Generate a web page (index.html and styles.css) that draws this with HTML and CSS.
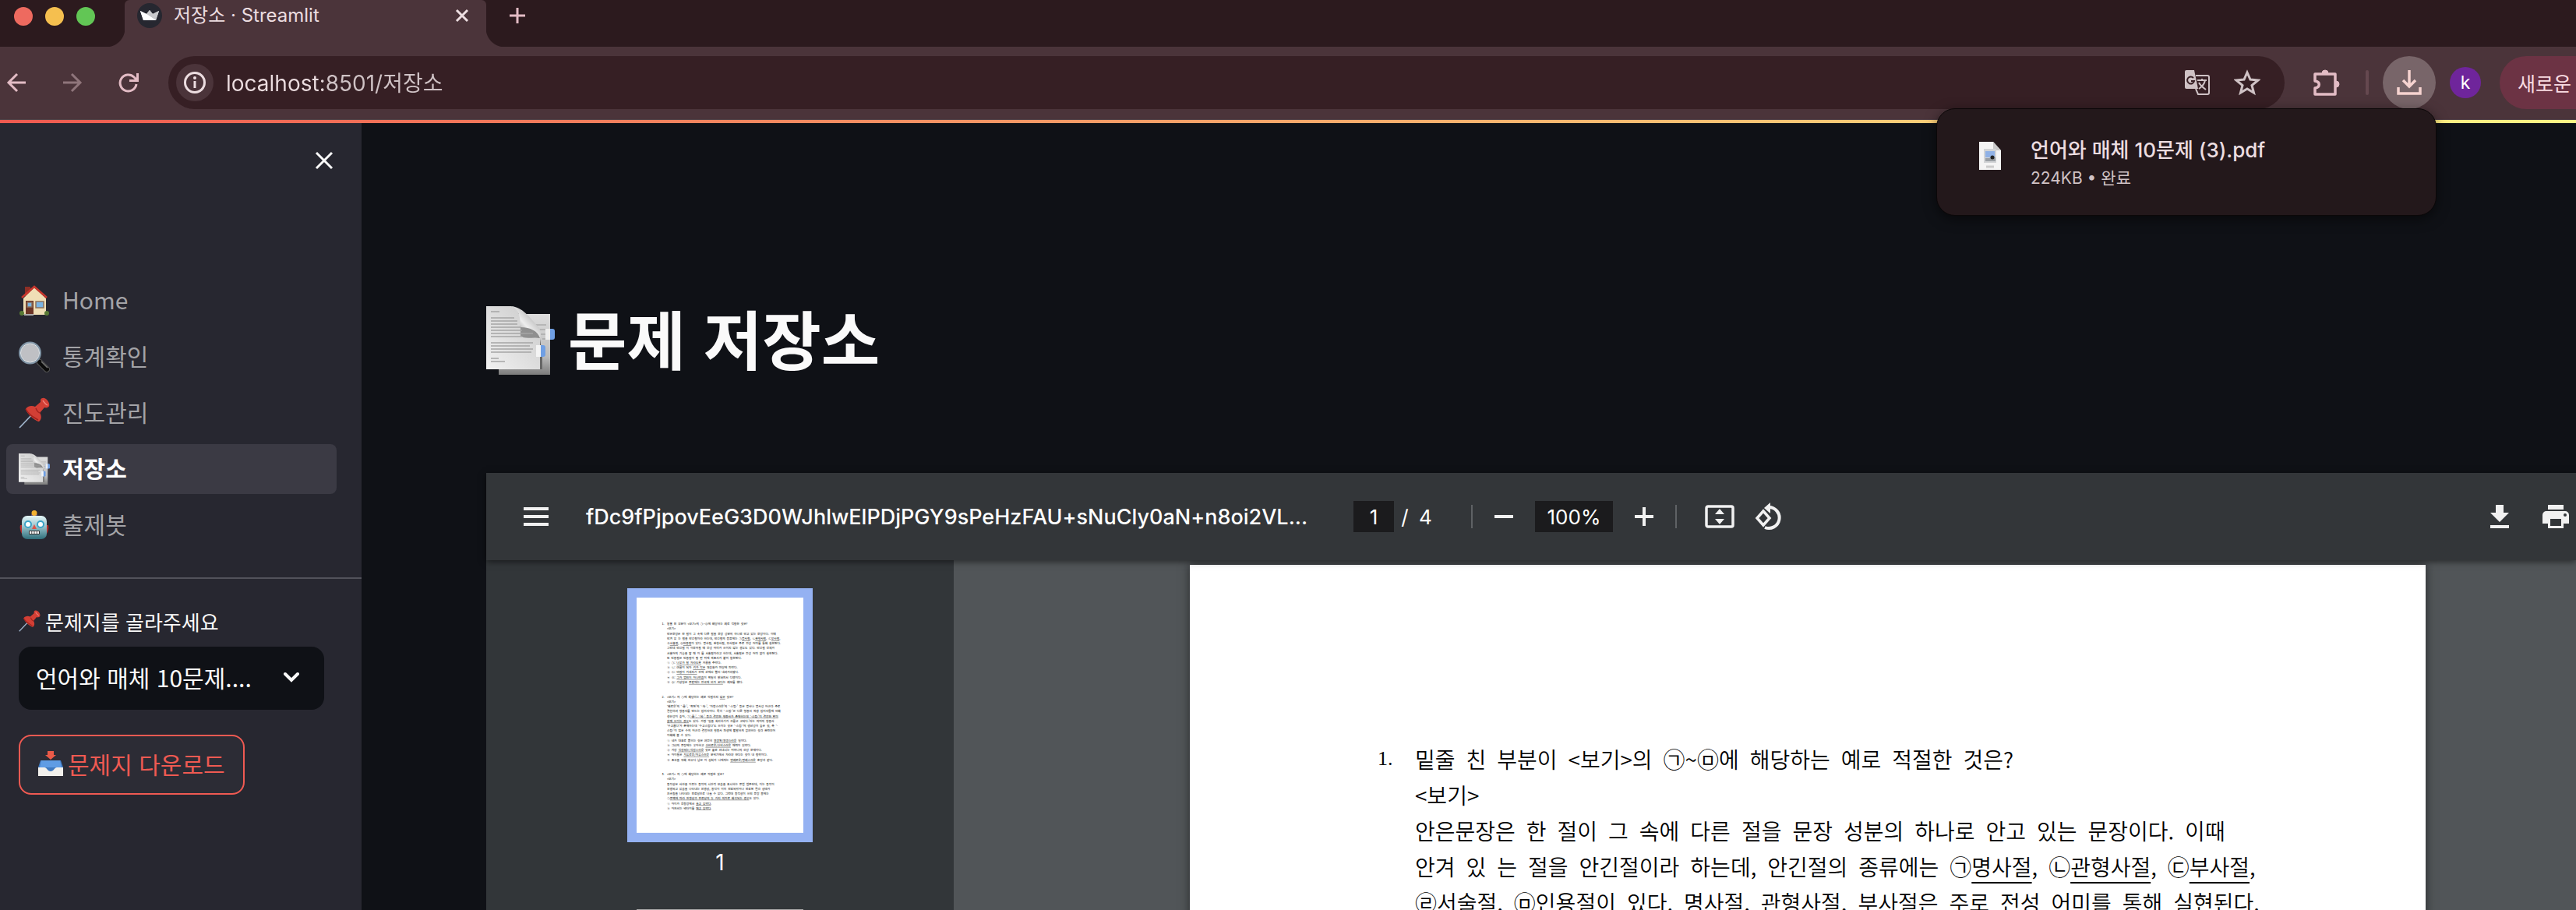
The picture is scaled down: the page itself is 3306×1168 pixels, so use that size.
FILE: index.html
```html
<!DOCTYPE html>
<html lang="ko">
<head>
<meta charset="utf-8">
<title>저장소 · Streamlit</title>
<link rel="stylesheet" href="styles.css">
</head>
<body>
<svg class="sprites" aria-hidden="true">
  <defs>
    <linearGradient id="paper" x1="0" y1="1" x2="1" y2="0"><stop offset="0" stop-color="#f1f1f1"/><stop offset="1" stop-color="#c9c9c9"/></linearGradient>
    <linearGradient id="curl" x1="0" y1="1" x2="1" y2="0"><stop offset="0" stop-color="#555"/><stop offset=".45" stop-color="#eee"/><stop offset="1" stop-color="#888"/></linearGradient>
    <linearGradient id="bot" x1="0" y1="0" x2="0" y2="1"><stop offset="0" stop-color="#e4f6f8"/><stop offset=".45" stop-color="#9cc4cc"/><stop offset="1" stop-color="#2f6f7b"/></linearGradient>
    <linearGradient id="backpaper" x1="0" y1="0" x2="0" y2="1"><stop offset="0" stop-color="#ddd"/><stop offset=".7" stop-color="#bbb"/><stop offset="1" stop-color="#7c7c7c"/></linearGradient>
  </defs>
  <symbol id="docs" viewBox="0 0 88 88">
    <path d="M16 10h66v78H16z" fill="url(#backpaper)"/>
    <path d="M60 24h17M66 30h11M70 36h7M72 42h5" stroke="#999" stroke-width="1"/>
    <path d="M0 0h32c8 2 11 9 11 18 2 9 22 8 26 22v41H0z" fill="url(#paper)"/>
    <path d="M69 42v39h3V62z" fill="#666"/>
    <path d="M32 0c14 1 23 13 36 28 2 3 2 9 1 13-3-9-13-14-26-14 2-12-1-23-11-27z" fill="url(#curl)"/>
    <path d="M44 27c13 0 22 5 25 14-8-2-20 2-25-3z" fill="#555" opacity=".55"/>
    <path d="M6 7h11M6 15h30M6 19h34M6 23h34M6 27h38M6 31h40M6 35h54M6 39h40M6 47h54M6 51h50M6 55h54M6 59h52M6 67h10M6 71h18" stroke="#a5a5a5" stroke-width="1.3"/>
    <rect x="76" y="29" width="12" height="14" rx="3" fill="#6f9fe4"/><path d="M76 29h6v14h-6z" fill="#eee"/>
    <rect x="64" y="50" width="12" height="15" rx="3" fill="#6f9fe4"/><path d="M64 50h6v15h-6z" fill="#f4f4f4"/>
  </symbol>
  <symbol id="pin" viewBox="0 0 40 40">
    <path d="M1 39L20 19" stroke="#9fb4cb" stroke-width="1.8"/>
    <path d="M28 3c2-4 7-2 9 1 3 4 3 8 0 9-2 1-4 0-4 0l-6 7c3 4 2 9-1 11-4 0-16-10-17-16 2-4 8-5 12-3l7-6z" fill="#d23f35"/>
    <path d="M22 14c2 5 5 6 6 6M9 15c4 7 9 10 16 14" stroke="#a3231e" stroke-width="1.5" fill="none"/>
    <path d="M31 4c2 3 3 5 6 6" stroke="#f08078" stroke-width="1.5" fill="none"/>
  </symbol>
</svg>

<header class="chrome">
  <div class="tabstrip">
    <div class="lights"><span class="light red"></span><span class="light yellow"></span><span class="light green"></span></div>
    <div class="tab">
      <svg class="favicon" viewBox="0 0 32 32"><circle cx="16" cy="16" r="16" fill="#262730"/><path d="M4 10l8 4 4-5 4 5 8-4-4 12H8z" fill="#fff"/><path d="M12 14l4-5 4 5 8-4-4 12z" fill="#c9c9cc"/><path d="M12 14l12 8H8L4 10z" fill="#fff"/></svg>
      <span class="tab-title">저장소 · Streamlit</span>
      <button class="icon-btn tab-close" aria-label="탭 닫기"><svg width="18" height="18" viewBox="0 0 18 18"><path d="M2 2l14 14M16 2L2 16" stroke="#ecdde0" stroke-width="3"/></svg></button>
    </div>
    <button class="icon-btn new-tab" aria-label="새 탭"><svg width="20" height="20" viewBox="0 0 20 20"><path d="M10 0v20M0 10h20" stroke="#e3bcc5" stroke-width="3"/></svg></button>
  </div>

  <div class="toolbar">
    <div class="history">
      <button class="icon-btn" aria-label="뒤로"><svg width="26" height="26" viewBox="0 0 26 26"><path d="M25 13H3M14 2L3 13l11 11" fill="none" stroke="#e3bcc5" stroke-width="3"/></svg></button>
      <button class="icon-btn" aria-label="앞으로"><svg width="26" height="26" viewBox="0 0 26 26"><path d="M1 13h22M12 2l11 11-11 11" fill="none" stroke="#8f757b" stroke-width="3"/></svg></button>
      <button class="icon-btn" aria-label="새로고침"><svg width="26" height="26" viewBox="0 0 26 26"><path d="M23 15a10.500 10.500 0 1 1-3-9l4 4" fill="none" stroke="#e3bcc5" stroke-width="3"/><path d="M26 1v11H14V9h9V1z" fill="#e3bcc5"/></svg></button>
    </div>
    <form class="omnibox">
      <button type="button" class="icon-btn site-info" aria-label="사이트 정보"><svg width="28" height="28" viewBox="0 0 28 28"><circle cx="14" cy="14" r="12.500" fill="none" stroke="#ecdde0" stroke-width="3"/><path d="M14 12v9" stroke="#ecdde0" stroke-width="3"/><circle cx="14" cy="8" r="2" fill="#ecdde0"/></svg></button>
      <input class="url" type="text" aria-label="주소창" value="localhost:8501/저장소">
      <button type="button" class="icon-btn" aria-label="번역"><svg width="34" height="34" viewBox="0 0 34 34"><path d="M3 1h10l5 24H3a2 2 0 0 1-2-2V3a2 2 0 0 1 2-2z" fill="#cfc2c5"/><path d="M15 8h15a2 2 0 0 1 2 2v20a2 2 0 0 1-2 2H18l-3-7" fill="none" stroke="#cfc2c5" stroke-width="2"/><path d="M12 11a4.500 4.500 0 1 0 1 4H9" fill="none" stroke="#361f24" stroke-width="2"/><path d="M17 14h12M23 12v2M27 14c-1 5-5 9-8 11M19 17c2 4 5 6 9 9" fill="none" stroke="#cfc2c5" stroke-width="2"/></svg></button>
      <button type="button" class="icon-btn" aria-label="북마크"><svg width="34" height="34" viewBox="0 0 34 34"><path d="M17 4l4 9 10 1-8 6.500L25.500 30 17 25l-8.500 5L11 20.500 3 14l10-1z" fill="none" stroke="#cfc2c5" stroke-width="3"/></svg></button>
    </form>
    <div class="actions">
      <button class="icon-btn" aria-label="확장 프로그램"><svg width="36" height="36" viewBox="0 0 36 36"><path d="M4 7h26v26H4v-8c7-1 7-8 0-9z" fill="none" stroke="#e3bcc5" stroke-width="3.500" stroke-linejoin="round"/><path d="M13 6a4 4 0 0 1 8 0zM31 16a4 4 0 0 1 0 8z" fill="#e3bcc5" stroke="#e3bcc5"/></svg></button>
      <span class="sep"></span>
      <button class="icon-btn dl-btn" aria-label="다운로드"><svg width="32" height="32" viewBox="0 0 32 32"><path d="M16 0v21M8 13l8 8 8-8M2 22v8h28v-8" fill="none" stroke="#f6d3d0" stroke-width="3.500"/></svg></button>
      <button class="avatar">k</button>
      <button class="update">새로운</button>
    </div>
    <aside class="download-popup">
      <svg class="pdf-icon" width="28" height="36" viewBox="0 0 28 36"><path d="M0 0h18l10 11v25H0z" fill="#f4f4f4"/><path d="M18 0l10 11H18z" fill="#c9c9c9"/><rect x="6" y="9" width="16" height="18" fill="#d2d4d6"/><rect x="8" y="12" width="12" height="8" fill="#8fb1e6"/><path d="M8 21h5l4-3 4 2v5H8z" fill="#9a9fa4"/><circle cx="17" cy="20" r="2.500" fill="#222"/><path d="M9 32h10" stroke="#ccc" stroke-width="3"/></svg>
      <div>
        <p class="file-name">언어와 매체 10문제 (3).pdf</p>
        <p class="file-meta">224KB • 완료</p>
      </div>
    </aside>
  </div>
</header>
<div class="decoration"></div>

<div class="app">
  <aside class="sidebar">
    <div class="sidebar-head"><button class="icon-btn" aria-label="사이드바 닫기"><svg width="24" height="24" viewBox="0 0 24 24"><path d="M2 2l20 20M22 2L2 22" stroke="#fafafa" stroke-width="3"/></svg></button></div>
    <nav class="nav">
      <a href="#home"><svg class="emoji" viewBox="0 0 40 40"><path d="M8 2h7v12H8z" fill="#8d2f26"/><path d="M20 3l15 14v21H6V17z" fill="#f0dfb6"/><path d="M4 16L20 2l16 14" fill="none" stroke="#c8372d" stroke-width="2.500"/><path d="M9 20h10v18H9z" fill="#6c3526"/><path d="M11 22h6v6h-6zM22 21h10v8H22z" fill="#79b4e4" stroke="#8a715c" stroke-width="1.500"/><circle cx="4" cy="36" r="3" fill="#587a35"/><circle cx="36" cy="36" r="3" fill="#587a35"/><path d="M7 37h12v2H7z" fill="#aaa"/></svg><span>Home</span></a>
      <a href="#stats"><svg class="emoji" viewBox="0 0 40 40"><path d="M25 25l4 4" stroke="#999" stroke-width="4"/><path d="M27 27l9 9" stroke="#555" stroke-width="8" stroke-linecap="round"/><path d="M27 27l9 9" stroke="#0b0b0b" stroke-width="6" stroke-linecap="round"/><path d="M29 26l8 8" stroke="#777" stroke-width="1.500"/><circle cx="14.500" cy="15" r="13" fill="#bfc0c4" stroke="#8195a6" stroke-width="3"/><circle cx="14.500" cy="15" r="12" fill="none" stroke="#e6e8ea" stroke-width="1"/></svg><span>통계확인</span></a>
      <a href="#progress"><svg class="emoji"><use href="#pin"/></svg><span>진도관리</span></a>
      <a href="#storage" class="current"><svg class="emoji"><use href="#docs"/></svg><span>저장소</span></a>
      <a href="#bot"><svg class="emoji" viewBox="0 0 40 40"><path d="M2 20h6v11H4c-2-3-3-8-2-11zM38 20h-6v11h4c2-3 3-8 2-11z" fill="#b22e2e"/><path d="M16 6h8v4h-8z" fill="#59457c"/><circle cx="20" cy="4.500" r="3.500" fill="#f2b233"/><rect x="4" y="8" width="32" height="30" rx="7" fill="url(#bot)"/><circle cx="12" cy="19" r="4" fill="#fff" stroke="#3ba4c8" stroke-width="2"/><circle cx="28" cy="19" r="4" fill="#fff" stroke="#3ba4c8" stroke-width="2"/><path d="M20 19l3 6h-6z" fill="#de5246"/><rect x="13" y="27" width="14" height="5" rx="1" fill="#333"/><path d="M14 29.500h12" stroke="#fff" stroke-width="3" stroke-dasharray="2.400 .800"/></svg><span>출제봇</span></a>
    </nav>
    <section class="picker">
      <label for="paper-select"><svg class="emoji small"><use href="#pin"/></svg>문제지를 골라주세요</label>
      <div class="select-wrap">
        <select id="paper-select"><option>언어와 매체 10문제....</option></select>
        <svg class="chevron" width="20" height="14" viewBox="0 0 20 14"><path d="M2 3l8 8 8-8" fill="none" stroke="#fafafa" stroke-width="4" stroke-linecap="round"/></svg>
      </div>
      <button class="download"><svg class="inbox" viewBox="0 0 32 32"><path d="M3 12h26l3 9v11H0V21z" fill="#3f79bf"/><path d="M4 12h24l2 9H2z" fill="#5f9ce4"/><path d="M0 21h8c3 0 4 5 8 5s5-5 8-5h8v11H0z" fill="#f2f0ec"/><path d="M12 0h8v5h3l-7 6-7-6h3z" fill="#ea5a48"/></svg>문제지 다운로드</button>
    </section>
  </aside>

  <main class="main">
    <h1><svg class="title-icon"><use href="#docs"/></svg><span>문제 저장소</span></h1>
    <section class="viewer">
      <div class="viewer-bar">
        <button class="icon-btn menu" aria-label="메뉴"><svg width="32" height="24" viewBox="0 0 32 24"><path d="M0 2h32M0 12h32M0 22h32" stroke="#f1f1f1" stroke-width="4"/></svg></button>
        <span class="doc-name">fDc9fPjpovEeG3D0WJhlwElPDjPGY9sPeHzFAU+sNuCly0aN+n8oi2VL...</span>
        <div class="pages"><input class="field page-field" type="text" aria-label="페이지" value="1"><span>/</span><span>4</span></div>
        <span class="vsep"></span>
        <div class="zoom">
          <button class="icon-btn" aria-label="축소"><svg width="24" height="24" viewBox="0 0 24 24"><path d="M0 12h24" stroke="#f1f1f1" stroke-width="4"/></svg></button>
          <input class="field zoom-field" type="text" aria-label="확대 비율" value="100%">
          <button class="icon-btn" aria-label="확대"><svg width="24" height="24" viewBox="0 0 24 24"><path d="M0 12h24M12 0v24" stroke="#f1f1f1" stroke-width="4"/></svg></button>
        </div>
        <span class="vsep"></span>
        <div class="fit">
          <button class="icon-btn" aria-label="페이지에 맞춤"><svg width="38" height="30" viewBox="0 0 38 30"><rect x="2" y="2" width="34" height="26" rx="2" fill="none" stroke="#f1f1f1" stroke-width="3.500"/><path d="M19 5l6 7H13zM19 25l6-7H13z" fill="#f1f1f1"/></svg></button>
          <button class="icon-btn" aria-label="회전"><svg width="36" height="36" viewBox="0 0 36 36"><path d="M11 11l8 9-8 9-8-9z" fill="none" stroke="#f1f1f1" stroke-width="3.500"/><path d="M18 6a13.500 13.500 0 1 1-5 26" fill="none" stroke="#f1f1f1" stroke-width="4"/><path d="M20 0v14l-8-7z" fill="#f1f1f1"/></svg></button>
        </div>
        <div class="viewer-end">
          <button class="icon-btn" aria-label="저장"><svg width="24" height="30" viewBox="0 0 24 30"><path d="M7 0h10v10h7L12 22 0 10h7zM0 26h24v4H0z" fill="#f1f1f1"/></svg></button>
          <button class="icon-btn" aria-label="인쇄"><svg width="34" height="30" viewBox="0 0 34 30"><path d="M7 0h20v6H7zM5 8h24a5 5 0 0 1 5 5v11h-7v6H7v-6H0V13a5 5 0 0 1 5-5zm5 10v9h14v-9z" fill="#f1f1f1" fill-rule="evenodd"/><circle cx="29" cy="13" r="2" fill="#323639"/></svg></button>
        </div>
      </div>
      <div class="viewer-body">
        <div class="thumbs">
          <button class="thumb" aria-label="페이지 1">
            <svg class="thumb-page" viewBox="0 0 1586 2237">
              <rect width="1586" height="2237" fill="#fff"/>
              <g class="thumb-text">
                <text x="240" y="261">1.</text><text x="289" y="261">밑줄&ensp;친&ensp;부분이&ensp;&lt;보기&gt;의&ensp;㉠~㉤에&ensp;해당하는&ensp;예로&ensp;적절한&ensp;것은?</text>
                <text x="289" y="306">&lt;보기&gt;</text>
                <text x="289" y="355">안은문장은&ensp;한&ensp;절이&ensp;그&ensp;속에&ensp;다른&ensp;절을&ensp;문장&ensp;성분의&ensp;하나로&ensp;안고&ensp;있는&ensp;문장이다.&ensp;이때</text>
                <text x="289" y="400">안겨&ensp;있&ensp;는&ensp;절을&ensp;안긴절이라&ensp;하는데,&ensp;안긴절의&ensp;종류에는&ensp;㉠<tspan class="u">명사절</tspan>,&ensp;㉡<tspan class="u">관형사절</tspan>,&ensp;㉢<tspan class="u">부사절</tspan>,</text>
                <text x="289" y="445">㉣<tspan class="u">서술절</tspan>,&ensp;㉤<tspan class="u">인용절</tspan>이&ensp;있다.&ensp;명사절,&ensp;관형사절,&ensp;부사절은&ensp;주로&ensp;전성&ensp;어미를&ensp;통해&ensp;실현된다.</text>
                <text x="289" y="489">그런데&ensp;안긴절&ensp;이&ensp;이루어질&ensp;때&ensp;전성&ensp;어미가&ensp;쓰이지&ensp;않는&ensp;경우도&ensp;있다.&ensp;안긴절&ensp;전체가</text>
                <text x="289" y="540">서술어의&ensp;기능을&ensp;할&ensp;때&ensp;이&ensp;를&ensp;서술절이라고&ensp;하는데,&ensp;서술절은&ensp;전성&ensp;어미&ensp;없이&ensp;실현된다.</text>
                <text x="289" y="585">또&ensp;인용절은&ensp;인용절이&ensp;될&ensp;말&ensp;뒤에&ensp;격조사가&ensp;붙어&ensp;실현된다.</text>
                <text x="289" y="630">①&ensp;㉠:&ensp;<tspan class="u">나무가&ensp;잘&ensp;자라도록</tspan>&ensp;거름을&ensp;주었다.</text>
                <text x="289" y="675">②&ensp;㉡:&ensp;여름이&ensp;되자&ensp;<tspan class="u">키가&ensp;작은</tspan>&ensp;채송화가&ensp;마당에&ensp;피었다.</text>
                <text x="289" y="720">③&ensp;㉢:&ensp;<tspan class="u">바람이&ensp;거세지기</tspan>&ensp;전에&ensp;산에서&ensp;빨리&ensp;내려가야겠다.</text>
                <text x="289" y="769">④&ensp;㉣:&ensp;<tspan class="u">그가&ensp;범인이&ensp;아니었음</tspan>이&ensp;확실히&ensp;밝혀져서&ensp;다행이다.</text>
                <text x="289" y="814">⑤&ensp;㉤:&ensp;기상청은&ensp;<tspan class="u">주말에는&ensp;전국에&ensp;비가&ensp;온다</tspan>는&ensp;예보를&ensp;했다.</text>
                <text x="240" y="955">2.</text><text x="289" y="955">&lt;보기&gt;&ensp;의&ensp;㉠에&ensp;해당하는&ensp;예로&ensp;적절하지&ensp;<tspan class="u">않은</tspan>&ensp;것은?</text>
                <text x="289" y="1000">&lt;보기&gt;</text>
                <text x="289" y="1043">‘해로운’의&ensp;‘-롭-’,&ensp;‘욕된’의&ensp;‘-되-’,&ensp;‘자랑스러운’의&ensp;‘-스럽-’&ensp;등은&ensp;명사나&ensp;명사성&ensp;어근과&ensp;주로</text>
                <text x="289" y="1088">결합하여&ensp;형용사를&ensp;만드는&ensp;접미사이다.&ensp;특히&ensp;‘-스럽-’은&ensp;다른&ensp;형용사&ensp;파생&ensp;접미사들에&ensp;비해</text>
                <text x="289" y="1138">생산성이&ensp;높아,&ensp;㉠<tspan class="u">‘-롭-’,&ensp;‘-되-’&ensp;등과&ensp;결합한&ensp;형용사가&ensp;존재하는데&ensp;‘-스럽-’이&ensp;결합한&ensp;말이</tspan></text>
                <text x="289" y="1183"><tspan class="u">함께&ensp;쓰이는&ensp;경우</tspan>도&ensp;있다.&ensp;가령&ensp;‘일을&ensp;처리하기가&ensp;괴롭고&ensp;고되다.’라는&ensp;의미의&ensp;형용사</text>
                <text x="289" y="1228">‘수고롭다’가&ensp;존재하는데&ensp;‘수고스럽다’도&ensp;쓰이는&ensp;것은&ensp;‘-스럽-’의&ensp;생산성이&ensp;높은&ensp;것,&ensp;즉&ensp;‘-</text>
                <text x="289" y="1275">스럽-’이&ensp;많은&ensp;수의&ensp;어근과&ensp;결합하여&ensp;형용사&ensp;파생에&ensp;활발하게&ensp;참여하는&ensp;것과&ensp;관련지어</text>
                <text x="289" y="1318">이해해&ensp;볼&ensp;수&ensp;있다.</text>
                <text x="289" y="1370">①&ensp;네가&ensp;대표로&ensp;뽑히는&ensp;것은&ensp;여전히&ensp;<tspan class="u">영광된/영광스러운</tspan>&ensp;일이다.</text>
                <text x="289" y="1414">②&ensp;그녀의&ensp;문장에는&ensp;우아하고&ensp;<tspan class="u">신비로운/신비스러운</tspan>&ensp;매력이&ensp;있었다.</text>
                <text x="289" y="1458">③&ensp;가장&ensp;<tspan class="u">걱정되는/걱정스러운</tspan>&ensp;것은&ensp;홀로&ensp;지내시는&ensp;어머니의&ensp;건강&ensp;문제이다.</text>
                <text x="289" y="1504">④&ensp;아이들은&ensp;<tspan class="u">자유로운/자유스러운</tspan>&ensp;분위기에서&ensp;자라야&ensp;한다는&ensp;것이&ensp;내&ensp;철학이다.</text>
                <text x="289" y="1555">⑤&ensp;조국을&ensp;위해&ensp;싸우다&ensp;남은&ensp;이&ensp;상처가&ensp;나에게는&ensp;<tspan class="u">명예로운/명예스러운</tspan>&ensp;훈장과&ensp;같다.</text>
                <text x="240" y="1688">3.</text><text x="289" y="1688">&lt;보기&gt;&ensp;의&ensp;㉠에&ensp;해당하는&ensp;예로&ensp;적절한&ensp;것은?</text>
                <text x="289" y="1733">&lt;보기&gt;</text>
                <text x="289" y="1783">동작상은&ensp;사건을&ensp;이루는&ensp;동작의&ensp;시간적&ensp;모습을&ensp;표시하는&ensp;문법&ensp;범주인데,&ensp;이는&ensp;동작이</text>
                <text x="289" y="1828">진행되고&ensp;있음을&ensp;나타내는&ensp;진행상,&ensp;동작이&ensp;이미&ensp;완료되었거나&ensp;완료된&ensp;결과&ensp;상태가</text>
                <text x="289" y="1872">지속됨을&ensp;나타내는&ensp;완료상으로&ensp;나눌&ensp;수&ensp;있다.&ensp;그런데&ensp;동작상이&ensp;쓰인&ensp;문장&ensp;중에는</text>
                <text x="289" y="1917">㉠<tspan class="u">문맥에&ensp;따라&ensp;진행상과&ensp;완료상의&ensp;두&ensp;가지&ensp;의미로&ensp;해석되는&ensp;경우</tspan>도&ensp;있다.</text>
                <text x="289" y="1968">①&ensp;아이가&ensp;운동장에서&ensp;<tspan class="u">놀고&ensp;있었다</tspan>.</text>
                <text x="289" y="2012">②&ensp;아저씨는&ensp;넥타이를&ensp;<tspan class="u">매고&ensp;있었다</tspan>.</text>
              </g>
            </svg>
          </button>
          <span class="thumb-no">1</span>
          <div class="thumb-next"></div>
        </div>
        <div class="canvas">
          <article class="page">
            <div class="question">
              <span class="q-no">1.</span>
              <div>
                <p>밑줄&ensp;친&ensp;부분이&ensp;&lt;보기&gt;의&ensp;㉠~㉤에&ensp;해당하는&ensp;예로&ensp;적절한&ensp;것은?</p>
                <p>&lt;보기&gt;</p>
                <p>안은문장은&ensp;한&ensp;절이&ensp;그&ensp;속에&ensp;다른&ensp;절을&ensp;문장&ensp;성분의&ensp;하나로&ensp;안고&ensp;있는&ensp;문장이다.&ensp;이때</p>
                <p>안겨&ensp;있&ensp;는&ensp;절을&ensp;안긴절이라&ensp;하는데,&ensp;안긴절의&ensp;종류에는&ensp;㉠<u>명사절</u>,&ensp;㉡<u>관형사절</u>,&ensp;㉢<u>부사절</u>,</p>
                <p>㉣<u>서술절</u>,&ensp;㉤<u>인용절</u>이&ensp;있다.&ensp;명사절,&ensp;관형사절,&ensp;부사절은&ensp;주로&ensp;전성&ensp;어미를&ensp;통해&ensp;실현된다.</p>
              </div>
            </div>
          </article>
        </div>
      </div>
    </section>
  </main>
</div>
</body>
</html>
```
FILE: styles.css
```css
* { box-sizing: border-box; }

body {
  margin: 0;
  height: 100vh;
  overflow: hidden;
  display: flex;
  flex-direction: column;
  background: #0f1116;
  color: #fafafa;
  font-family: "Noto Sans CJK KR", sans-serif;
}

p, h1 { margin: 0; padding: 0; }
button, input, select { font: inherit; color: inherit; }
svg { display: block; flex: none; }
.sprites { position: absolute; width: 0; height: 0; }

.icon-btn {
  display: flex;
  align-items: center;
  justify-content: center;
  flex: none;
  padding: 0;
  border: 0;
  background: none;
}

/* Browser frame */
.chrome { flex: none; background: #4b343a; font-family: Inter, "Noto Sans CJK KR", sans-serif; }

.tabstrip { display: flex; height: 60px; background: #2c1a1e; }
.lights { display: flex; gap: 16px; width: 160px; padding: 9px 0 0 18px; }
.light { width: 24px; height: 24px; border-radius: 50%; }
.red { background: #ee6a5f; }
.yellow { background: #f5bf4f; }
.green { background: #62c655; }

.tab {
  position: relative;
  display: flex;
  align-items: center;
  width: 464px;
  padding: 0 22px 20px 16px;
  border-radius: 6px 6px 0 0;
  background: #4b343a;
}
.tab::before, .tab::after {
  content: "";
  position: absolute;
  bottom: 0;
  width: 24px;
  height: 24px;
}
.tab::before { right: 100%; background: radial-gradient(circle at 0 0, #2c1a1e 24px, #4b343a 25px); }
.tab::after { left: 100%; background: radial-gradient(circle at 100% 0, #2c1a1e 24px, #4b343a 25px); }
.favicon { width: 32px; height: 32px; }
.tab-title { flex: 1; margin-left: 15px; color: #ecdde0; font-size: 24px; line-height: 32px; }
.new-tab { width: 80px; height: 40px; }

.toolbar { position: relative; display: flex; align-items: center; height: 94px; padding-bottom: 2px; border-bottom: 1px solid #544347; }
.history { display: flex; gap: 46px; width: 216px; padding-left: 8px; }
.omnibox {
  display: flex;
  align-items: center;
  flex: 1;
  min-width: 0;
  height: 68px;
  padding: 0 31px 0 10px;
  gap: 30px;
  border-radius: 34px;
  background: #361f24;
}
.site-info { width: 48px; height: 48px; border-radius: 50%; background: #4b343a; }
.url {
  flex: 1;
  min-width: 0;
  margin-left: -14px;
  padding: 0 0 2px;
  border: 0;
  font-size: 28px;
  color: transparent;
  background: linear-gradient(90deg, #ecdde0 124px, #cfc2c5 124px);
  background-clip: text;
}
.actions { display: flex; align-items: center; flex: none; padding-left: 35px; }
.sep { width: 4px; height: 32px; margin: 0 18px 0 33px; border-radius: 2px; background: #65484f; }
.dl-btn { width: 68px; height: 68px; border-radius: 50%; background: #786569; }
.avatar { width: 40px; height: 40px; margin: 0 24px 0 18px; padding: 0; border: 0; border-radius: 50%; background: #6f259b; color: #fff; font-size: 23px; line-height: 40px; }
.update { width: 98px; height: 68px; padding: 0 0 0 23px; border: 0; border-radius: 34px 0 0 34px; background: #6c3344; color: #f9dce2; font-size: 25px; text-align: left; white-space: nowrap; }

.download-popup {
  position: absolute;
  z-index: 2;
  top: 79px;
  right: 179px;
  display: flex;
  gap: 38px;
  width: 642px;
  height: 138px;
  padding: 35px 54px;
  border: 1px solid #0b0708;
  border-radius: 24px;
  background: #23181b;
  box-shadow: 0 4px 16px #0008;
}
.pdf-icon { margin-top: 7px; }
.file-name { color: #ecdde0; font-size: 26px; font-weight: 500; line-height: 36px; }
.file-meta { color: #cfc2c5; font-size: 21px; line-height: 36px; }

.decoration { flex: none; height: 4px; background: linear-gradient(90deg, #ef5a50, #fff585); }

/* App */
.app { display: flex; flex: 1; min-height: 0; }
.sidebar { flex: none; width: 464px; background: #272730; }
.sidebar-head { display: flex; justify-content: flex-end; padding: 36px 36px 136px; }

.nav { display: flex; flex-direction: column; gap: 8px; padding: 0 32px 35px 8px; }
.nav a {
  display: flex;
  align-items: center;
  gap: 16px;
  height: 64px;
  padding: 0 16px;
  border-radius: 8px;
  color: #a3a3a7;
  font-size: 30px;
  line-height: 48px;
  text-decoration: none;
}
.nav span { padding-bottom: 4px; }
.nav a.current { background: #3b3a44; color: #fff; font-weight: 700; }
.emoji { width: 40px; height: 40px; }
.emoji.small { width: 28px; height: 28px; }

.picker { padding: 32px 48px 0 24px; border-top: 2px solid #52525a; }
.picker label { display: flex; align-items: center; gap: 6px; height: 44px; margin-bottom: 11px; font-size: 26px; }
.select-wrap { position: relative; }
.picker select {
  display: block;
  appearance: none;
  width: 100%;
  height: 81px;
  padding: 0 22px 4px;
  border: 0;
  border-radius: 16px;
  background: #0f1116;
  font-size: 30px;
}
.chevron { position: absolute; right: 32px; top: 32px; }
.download {
  display: flex;
  align-items: center;
  gap: 6px;
  height: 77px;
  margin-top: 32px;
  padding: 0 23px 4px;
  border: 2px solid #f05a52;
  border-radius: 16px;
  background: #2c2c35;
  color: #f05a52;
  font-size: 30px;
  white-space: nowrap;
}
.inbox { width: 32px; height: 32px; }

.main { display: flex; flex-direction: column; flex: 1; min-width: 0; padding-left: 160px; }
h1 { display: flex; align-items: center; gap: 17px; padding: 219px 0 110px; font-size: 82px; font-weight: 700; line-height: 112px; }
h1 span { padding-bottom: 8px; }
.title-icon { width: 88px; height: 88px; }

/* PDF viewer */
.viewer { display: flex; flex-direction: column; flex: 1; min-height: 0; background: #515558; }
.viewer-bar {
  position: relative;
  z-index: 1;
  display: flex;
  align-items: center;
  flex: none;
  height: 112px;
  padding: 0 9px 0 48px;
  background: #333639;
  box-shadow: 0 2px 8px #0008;
  color: #fff;
  font-family: Inter, sans-serif;
  font-size: 26px;
}
.doc-name { width: 1033px; padding-left: 48px; font-size: 27px; font-weight: 500; white-space: nowrap; overflow: hidden; }
.field { height: 40px; padding: 0; border: 0; background: #1b1b1d; text-align: center; }
.page-field { width: 52px; }
.zoom-field { width: 100px; }
.pages { display: flex; align-items: center; gap: 6px; width: 151px; }
.pages span { width: 16px; text-align: center; }
.pages span + span { margin-left: 4px; }
.vsep { width: 2px; height: 30px; background: #5f6265; }
.zoom { display: flex; align-items: center; gap: 28px; padding: 0 28px; }
.fit { display: flex; align-items: center; gap: 26px; padding-left: 36px; }
.viewer-end { display: flex; align-items: center; gap: 43px; margin-left: auto; }

.viewer-body { display: flex; flex: 1; min-height: 0; }
.thumbs { display: flex; flex-direction: column; align-items: center; flex: none; width: 600px; padding-top: 36px; background: #323639; overflow: hidden; }
.thumb { flex: none; padding: 12px; border: 0; background: #94b1f2; }
.thumb-page { width: 214px; height: 302px; }
.thumb-text { font-size: 28px; }
.u { text-decoration: underline; text-decoration-thickness: 6px; }
.thumb-no { padding: 10px 0 44px; font-family: Inter, sans-serif; font-size: 28px; line-height: 32px; }
.thumb-next { flex: none; width: 214px; height: 302px; background: #aaa; }

.canvas { display: grid; grid-template-columns: 303fr 1586fr 193fr; flex: 1; min-width: 0; overflow: hidden; }
.page { grid-column: 2; margin-top: 6px; padding: 226px 0 0 241px; background: #fff; box-shadow: 0 0 12px #0008; color: #000; }
.question { display: flex; font-size: 28px; font-weight: 350; line-height: 46px; white-space: nowrap; }
.q-no { width: 48px; font-family: "Liberation Serif", serif; font-size: 26px; }
.page u { text-underline-offset: 8px; text-decoration-thickness: 2px; text-decoration-skip-ink: none; }
```
